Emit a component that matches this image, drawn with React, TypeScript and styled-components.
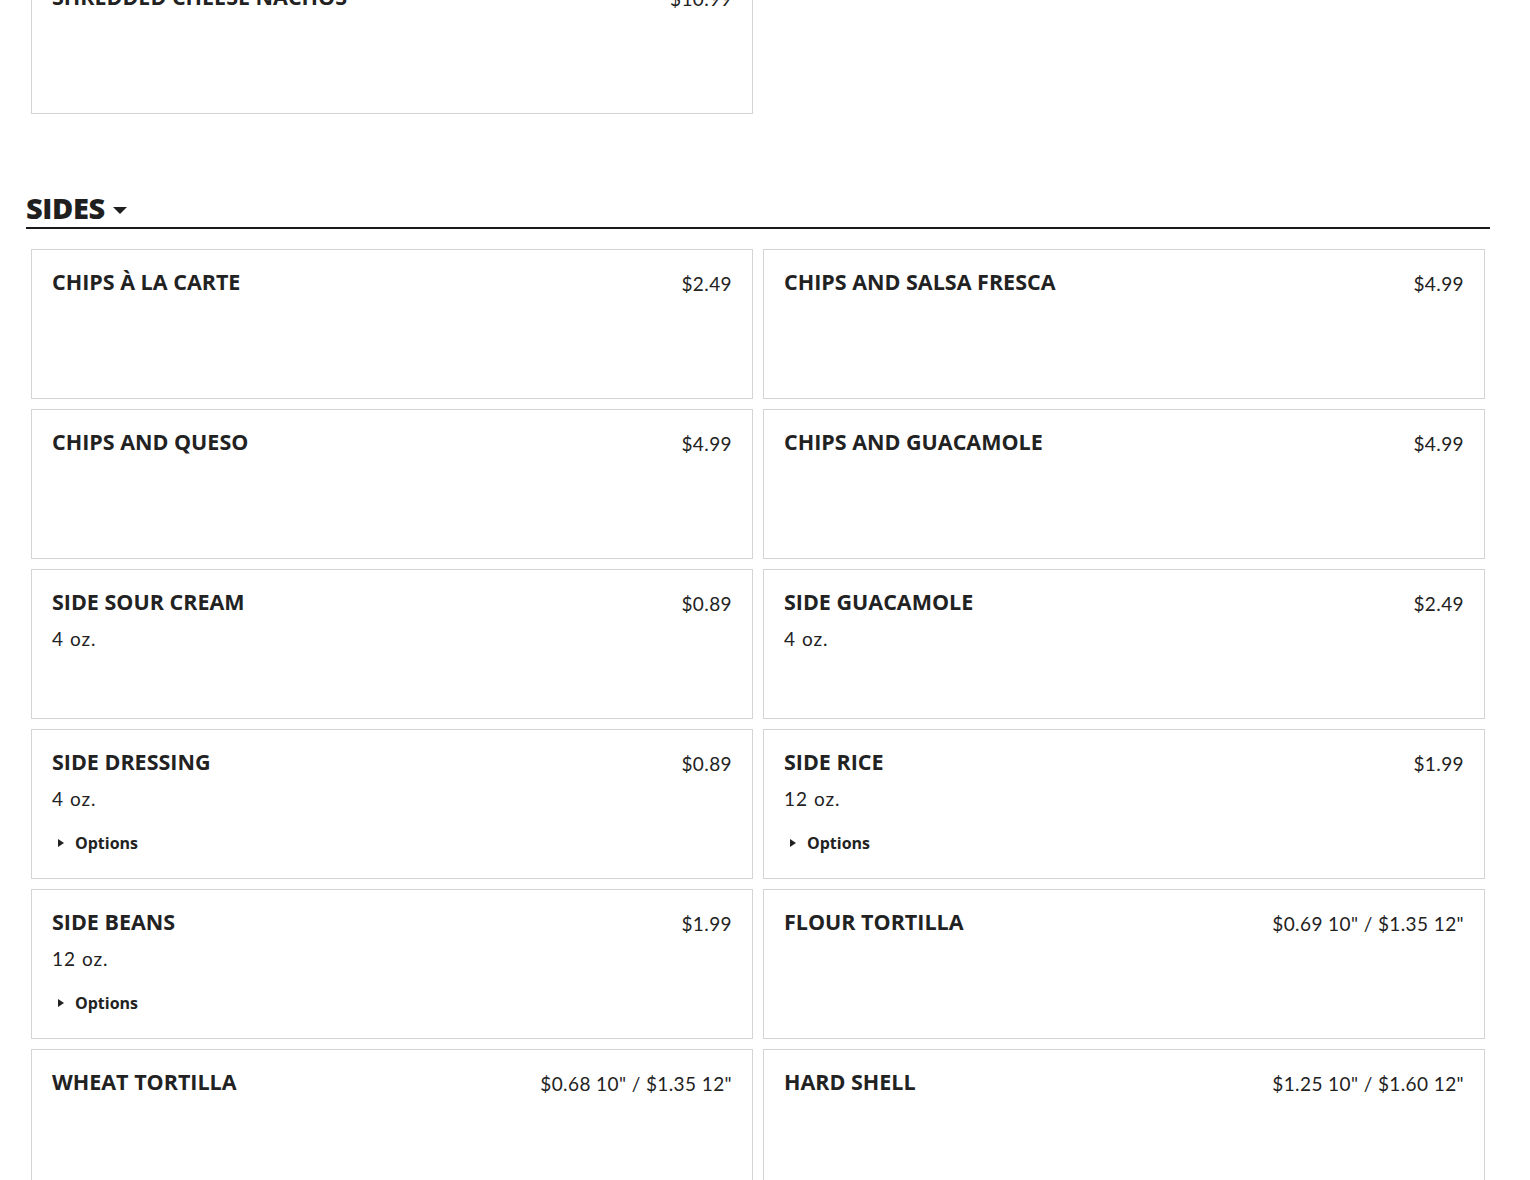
import React from "react";
import styled, { createGlobalStyle } from "styled-components";

const Global = createGlobalStyle`
  html, body { margin: 0; padding: 0; background: #fff; }
  body { font-family: Lato, "Open Sans", sans-serif; color: #222; }
`;

const Page = styled.div`
  margin-top: -36px;
  padding: 0 40px 0 26px;
`;

const Section = styled.section`
  margin-bottom: 75px;
`;

const Header = styled.h2`
  margin: 0 0 20px;
  display: flex;
  align-items: center;
  gap: 8px;
  font-family: "Open Sans", sans-serif;
  font-weight: 800;
  font-size: 29px;
  line-height: 38px;
  letter-spacing: -0.4px;
  color: #1f1f1f;
  border-bottom: 2px solid #1a1a1a;
`;

const Caret = styled.span`
  width: 0;
  height: 0;
  border-left: 7px solid transparent;
  border-right: 7px solid transparent;
  border-top: 7px solid #1f1f1f;
  margin-top: 4px;
`;

const Grid = styled.div`
  display: grid;
  grid-template-columns: repeat(2, 722px);
  gap: 10px;
  padding: 0 5px;
`;

const Card = styled.div`
  box-sizing: border-box;
  height: 150px;
  border: 1px solid #d4d4d4;
  padding: 19px 20px 0;
  background: #fff;
`;

const Row = styled.div`
  display: flex;
  justify-content: space-between;
  align-items: baseline;
`;

const Title = styled.h3`
  margin: 0;
  font-family: "Open Sans", sans-serif;
  font-weight: 700;
  font-size: 21.5px;
  line-height: 26px;
  color: #222;
`;

const Price = styled.span`
  font-family: Lato, sans-serif;
  font-size: 19px;
  line-height: 26px;
  color: #222;
  letter-spacing: 0.4px;
  position: relative;
  top: 1px;
`;

const Desc = styled.p`
  margin: 11px 0 0;
  font-family: Lato, sans-serif;
  font-size: 19px;
  line-height: 24px;
  letter-spacing: 1px;
  color: #222;
`;

const Options = styled.div`
  margin-top: 22px;
  display: flex;
  align-items: center;
  gap: 11px;
  padding-left: 6px;
  font-family: "Open Sans", sans-serif;
  font-weight: 700;
  font-size: 16px;
  line-height: 20px;
  color: #222;
`;

const OptCaret = styled.span`
  width: 0;
  height: 0;
  border-top: 4.5px solid transparent;
  border-bottom: 4.5px solid transparent;
  border-left: 6px solid #222;
`;

type Item = { name: string; price: string; desc?: string; options?: boolean };

const sides: Item[] = [
  { name: "CHIPS À LA CARTE", price: "$2.49" },
  { name: "CHIPS AND SALSA FRESCA", price: "$4.99" },
  { name: "CHIPS AND QUESO", price: "$4.99" },
  { name: "CHIPS AND GUACAMOLE", price: "$4.99" },
  { name: "SIDE SOUR CREAM", price: "$0.89", desc: "4 oz." },
  { name: "SIDE GUACAMOLE", price: "$2.49", desc: "4 oz." },
  { name: "SIDE DRESSING", price: "$0.89", desc: "4 oz.", options: true },
  { name: "SIDE RICE", price: "$1.99", desc: "12 oz.", options: true },
  { name: "SIDE BEANS", price: "$1.99", desc: "12 oz.", options: true },
  { name: "FLOUR TORTILLA", price: "$0.69 10\" / $1.35 12\"" },
  { name: "WHEAT TORTILLA", price: "$0.68 10\" / $1.35 12\"" },
  { name: "HARD SHELL", price: "$1.25 10\" / $1.60 12\"" },
];

const MenuCard = ({ item }: { item: Item }) => (
  <Card>
    <Row>
      <Title>{item.name}</Title>
      <Price>{item.price}</Price>
    </Row>
    {item.desc && <Desc>{item.desc}</Desc>}
    {item.options && (
      <Options>
        <OptCaret />
        Options
      </Options>
    )}
  </Card>
);

export default function App() {
  return (
    <>
      <Global />
      <Page>
        <Section>
          <Grid>
            <MenuCard item={{ name: "SHREDDED CHEESE NACHOS", price: "$10.99" }} />
          </Grid>
        </Section>
        <Section>
          <Header>
            SIDES <Caret />
          </Header>
          <Grid>
            {sides.map((s) => (
              <MenuCard key={s.name} item={s} />
            ))}
          </Grid>
        </Section>
      </Page>
    </>
  );
}
